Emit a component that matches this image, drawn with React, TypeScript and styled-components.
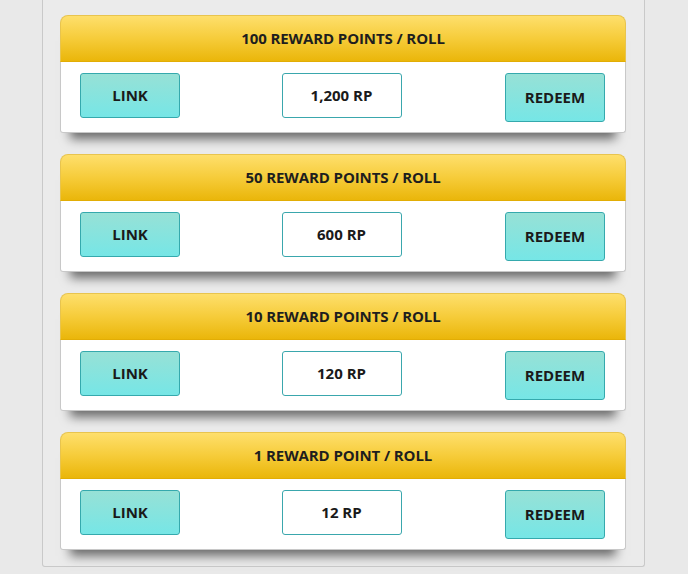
import React from "react";
import styled, { createGlobalStyle } from "styled-components";

const GlobalStyle = createGlobalStyle`
  html, body {
    margin: 0;
    padding: 0;
    background: #e9e9e9;
    font-family: "Open Sans", "Liberation Sans", sans-serif;
  }
`;

const Page = styled.div`
  width: 688px;
  height: 574px;
  overflow: hidden;
`;

const Panel = styled.div`
  margin-left: 42px;
  width: 568px;
  padding: 15px 16px 16px 17px;
  background: #ebebeb;
  border: 1px solid #c9c9c9;
  border-top: none;
  border-radius: 0 0 3px 3px;
  display: flex;
  flex-direction: column;
  gap: 21px;
`;

const Card = styled.div`
  width: 566px;
  border-radius: 8px 8px 3px 3px;
  box-shadow: 0 16px 10px -10px rgba(0, 0, 0, 0.55);
`;

const Header = styled.div`
  height: 47px;
  box-sizing: border-box;
  padding-bottom: 2px;
  border: 1px solid #e8c44e;
  border-bottom: 1px solid #e2ad05;
  border-radius: 8px 8px 0 0;
  background: linear-gradient(to bottom, #fedf6c 0%, #f6cc3a 50%, #eab60a 100%);
  display: flex;
  align-items: center;
  justify-content: center;
  font-size: 15px;
  font-weight: 700;
  color: #1e1e1e;
  letter-spacing: -0.1px;
`;

const Body = styled.div`
  background: #fff;
  border: 1px solid #c8c8c8;
  border-top: none;
  border-radius: 0 0 3px 3px;
  padding: 11px 20px 10px 19px;
  display: flex;
  justify-content: space-between;
  align-items: flex-start;
`;

const TealButton = styled.div<{ $tall?: boolean }>`
  width: 100px;
  height: ${(p) => (p.$tall ? 49 : 45)}px;
  box-sizing: border-box;
  padding-bottom: 2px;
  border: 1px solid #35a9ad;
  border-radius: 3px;
  background: linear-gradient(to bottom, #97e1d6 0%, #76e6e6 100%);
  display: flex;
  align-items: center;
  justify-content: center;
  font-size: 15px;
  font-weight: 700;
  color: #1a1a1a;
`;

const ValueBox = styled.div`
  width: 120px;
  height: 45px;
  box-sizing: border-box;
  padding-bottom: 2px;
  margin-right: 2px;
  border: 1px solid #3aa7ad;
  border-radius: 3px;
  background: #fff;
  display: flex;
  align-items: center;
  justify-content: center;
  font-size: 15px;
  font-weight: 700;
  color: #1a1a1a;
`;

const tiers = [
  { title: "100 REWARD POINTS / ROLL", value: "1,200 RP" },
  { title: "50 REWARD POINTS / ROLL", value: "600 RP" },
  { title: "10 REWARD POINTS / ROLL", value: "120 RP" },
  { title: "1 REWARD POINT / ROLL", value: "12 RP" },
];

export default function App() {
  return (
    <Page>
      <GlobalStyle />
      <Panel>
        {tiers.map((t) => (
          <Card key={t.title}>
            <Header>{t.title}</Header>
            <Body>
              <TealButton>LINK</TealButton>
              <ValueBox>{t.value}</ValueBox>
              <TealButton $tall>REDEEM</TealButton>
            </Body>
          </Card>
        ))}
      </Panel>
    </Page>
  );
}
